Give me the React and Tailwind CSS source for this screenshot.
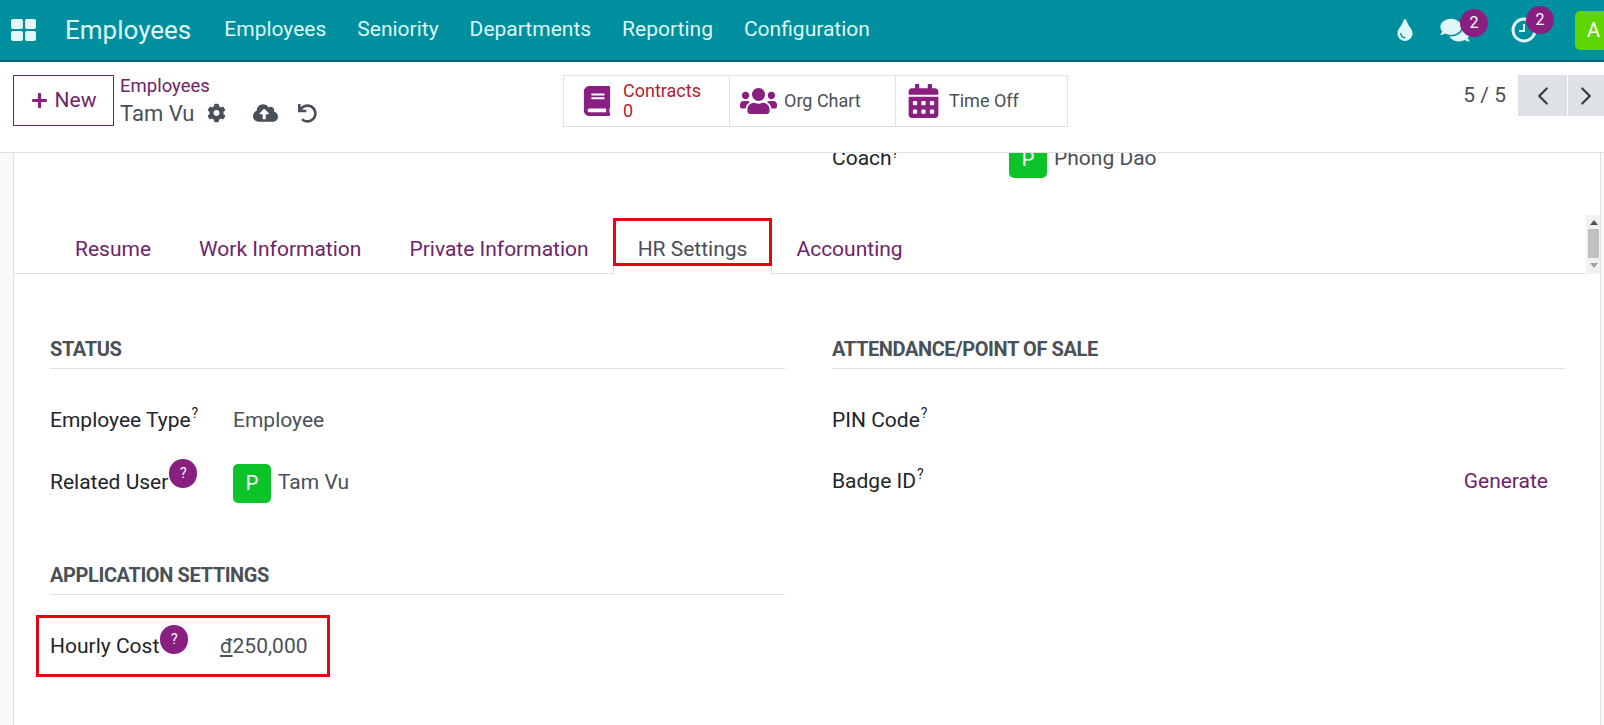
import { FaPlus, FaCog, FaCloudUploadAlt, FaUndo, FaBook, FaUsers, FaCalendarAlt, FaTint, FaComments } from 'react-icons/fa';
import { LuChevronLeft, LuChevronRight } from 'react-icons/lu';

function NavBadge({ children }) {
  return (
    <span className="absolute -top-[8px] left-[20px] w-[28px] h-[28px] rounded-full bg-[#8a1f82] text-white text-[16px] flex items-center justify-center">
      {children}
    </span>
  );
}

function HelpDot({ className }) {
  return (
    <span className={`inline-flex items-center justify-center w-[28px] h-[29px] rounded-full bg-[#8a1f82] text-white text-[14px] shrink-0 ${className}`}>?</span>
  );
}

function Avatar() {
  return (
    <span className="w-[38px] h-[39px] rounded-[5px] bg-[#0cc42a] text-white text-[20px] flex items-center justify-center shrink-0">P</span>
  );
}

function SectionTitle({ children }) {
  return (
    <div className="h-[38px] border-b border-[#dee2e6] text-[20px] font-bold text-[#495057] tracking-[-0.4px] leading-[22px] pt-[7px]">
      {children}
    </div>
  );
}

function Tab({ children, active }) {
  if (active) {
    return (
      <div className="relative h-[56px] -mb-px px-[24px] pt-[8px] flex items-center bg-white border-x border-[#dee2e6] text-[#495057]">
        {children}
        <div className="absolute -left-px -right-px top-0 h-[48px] border-[3px] border-[#e30613]" />
      </div>
    );
  }
  return <div className="h-[55px] px-[24px] pt-[8px] flex items-center text-[#6f2369]">{children}</div>;
}

function StatButton({ icon, children, last }) {
  return (
    <div className={`h-full flex items-center pl-[17px] ${last ? 'w-[169px]' : 'w-[166px] border-r border-[#dee2e6]'}`}>
      {icon}
      {children}
    </div>
  );
}

export default function App() {
  return (
    <div className="w-[1604px] h-[725px] overflow-hidden bg-white flex flex-col font-['Roboto',sans-serif] text-[21px] text-[#212529]">
      {/* Top bar */}
      <header className="h-[62px] shrink-0 bg-[#008f9e] border-b-2 border-[#05636d] flex items-center text-[#dff7f7] overflow-hidden">
        <div className="ml-[11px] w-[25px] grid grid-cols-2 gap-[2px]">
          <span className="h-[10px] rounded-[2px] bg-[#e3f8f8]" />
          <span className="h-[10px] rounded-[2px] bg-[#e3f8f8]" />
          <span className="h-[10px] rounded-[2px] bg-[#e3f8f8]" />
          <span className="h-[10px] rounded-[2px] bg-[#e3f8f8]" />
        </div>
        <div className="ml-[29px] text-[26px]">Employees</div>
        <nav className="ml-[33px] flex gap-[31px]">
          <span>Employees</span>
          <span>Seniority</span>
          <span>Departments</span>
          <span>Reporting</span>
          <span>Configuration</span>
        </nav>
        <div className="ml-auto flex items-center">
          <FaTint className="w-[18px] h-[22px]" />
          <div className="relative ml-[26px] w-[30px] h-[26px]">
            <FaComments className="w-[30px] h-[26px]" />
            <NavBadge>2</NavBadge>
          </div>
          <div className="relative ml-[41px] w-[26px] h-[26px]">
            <svg viewBox="0 0 26 26" className="w-[26px] h-[26px]" fill="none" stroke="currentColor">
              <circle cx="13" cy="13" r="11" strokeWidth="3" />
              <path d="M13 7v7h-5" strokeWidth="2" />
            </svg>
            <span className="absolute -top-[11px] left-[15px] w-[28px] h-[28px] rounded-full bg-[#8a1f82] text-white text-[16px] flex items-center justify-center">2</span>
          </div>
          <div className="ml-[38px] w-[29px] h-[39px] rounded-l-[5px] bg-[#5fd500] text-white text-[20px] pl-[12px] flex items-center -mr-0 overflow-hidden">A</div>
        </div>
      </header>

      {/* Control panel */}
      <div className="h-[91px] shrink-0 border-b border-[#dee2e6] flex pt-[13px]">
        <div className="w-[563px] pl-[13px] flex items-start">
          <button className="w-[101px] h-[51px] border border-[#6f2369] flex items-center justify-center gap-[7px] text-[#6f2369]">
            <FaPlus className="w-[17px] h-[17px] text-[#8a1f82]" />
            New
          </button>
          <div className="ml-[6px]">
            <div className="text-[18.5px] leading-[22px] text-[#6f2369] -mt-[1px] pt-[1px]">Employees</div>
            <div className="flex items-center h-[30px] text-[#495057] mt-[1px]">
              <span className="text-[22px]">Tam Vu</span>
              <FaCog className="ml-[13px] w-[19px] h-[20px]" />
              <FaCloudUploadAlt className="ml-[27px] w-[25px] h-[22px]" />
              <FaUndo className="ml-[20px] w-[19px] h-[19px]" />
            </div>
          </div>
        </div>
        <div className="w-[505px] h-[52px] flex border border-[#dee2e6] text-[18px] leading-[20px] text-[#495057]">
          <StatButton icon={<FaBook className="w-[32px] h-[30px] text-[#8a1f82] mr-[10px]" />}>
            <div className="text-[#b4202f]">Contracts<br />0</div>
          </StatButton>
          <StatButton icon={<FaUsers className="w-[37px] h-[34px] text-[#8a1f82] -ml-[7px] mr-[7px]" />}>
            <div>Org Chart</div>
          </StatButton>
          <StatButton last icon={<FaCalendarAlt className="w-[31px] h-[34px] text-[#8a1f82] -ml-[5px] mr-[10px]" />}>
            <div>Time Off</div>
          </StatButton>
        </div>
        <div className="flex-1 flex justify-end items-start overflow-hidden">
          <div className="h-[41px] flex items-center text-[#495057] mr-[12px]">5 / 5</div>
          <div className="w-[49px] h-[41px] bg-[#dee2e6] flex items-center justify-center mr-px text-[#343a40]">
            <LuChevronLeft className="w-[30px] h-[30px]" strokeWidth={1.7} />
          </div>
          <div className="w-[36px] h-[41px] bg-[#dee2e6] flex items-center pl-[3px] text-[#343a40]">
            <LuChevronRight className="w-[30px] h-[30px] shrink-0" strokeWidth={1.7} />
          </div>
        </div>
      </div>

      {/* Form */}
      <main className="flex-1 min-h-0 flex bg-[#f8f9fa]">
        <div className="w-[13px] shrink-0 border-r border-[#dee2e6] box-content" />
        <div className="relative w-[1587px] bg-white border-r border-[#dee2e6] overflow-hidden">
          <div className="-mt-[14px] h-[39px] flex items-center pl-[818px]">
            <span className="w-[177px]">Coach<sup className="text-[14px]">?</sup></span>
            <Avatar />
            <span className="ml-[7px] text-[#495057]">Phong Dao</span>
          </div>

          <div className="mt-[40px] h-[56px] pl-[37px] border-b border-[#dee2e6] flex">
            <Tab>Resume</Tab>
            <Tab>Work Information</Tab>
            <Tab>Private Information</Tab>
            <Tab active>HR Settings</Tab>
            <Tab>Accounting</Tab>
          </div>

          {/* Scrollbar of the tab strip */}
          <div className="absolute left-[1572px] top-[62px] w-[15px] h-[59px] bg-[#f1f1f1] flex flex-col items-center">
            <span className="mt-[5px] border-x-[4px] border-x-transparent border-b-[5px] border-b-[#505050]" />
            <span className="mt-[4px] w-[11px] h-[29px] bg-[#c1c1c1]" />
            <span className="mt-[5px] border-x-[4px] border-x-transparent border-t-[5px] border-t-[#a3a3a3]" />
          </div>

          <div className="mt-[57px] pl-[36px] grid grid-cols-[735px_733px] gap-x-[47px]">
            <section>
              <SectionTitle>STATUS</SectionTitle>
              <div className="mt-[32px] flex items-center h-[40px]">
                <span className="w-[183px]">Employee Type<sup className="text-[14px] -top-[9px] relative align-baseline ml-[1px]">?</sup></span>
                <span className="text-[#495057]">Employee</span>
              </div>
              <div className="mt-[22px] flex items-center h-[40px]">
                <span className="w-[183px] flex items-center">
                  Related User
                  <HelpDot className="relative -top-[10px] ml-px" />
                </span>
                <Avatar />
                <span className="ml-[7px] text-[#495057]">Tam Vu</span>
              </div>
              <div className="mt-[54px]">
                <SectionTitle>APPLICATION SETTINGS</SectionTitle>
              </div>
              <div className="relative mt-[32px] flex items-center h-[40px]">
                <span className="w-[170px] flex items-center">
                  Hourly Cost
                  <HelpDot className="relative -top-[8px] ml-px" />
                </span>
                <span className="text-[#495057]"><span className="underline">đ</span>250,000</span>
                <div className="absolute -left-[14px] -top-[12px] w-[294px] h-[62px] border-[3px] border-[#e30613]" />
              </div>
            </section>
            <section>
              <SectionTitle>ATTENDANCE/POINT OF SALE</SectionTitle>
              <div className="mt-[32px] flex items-center h-[40px]">
                <span>PIN Code<sup className="text-[14px] -top-[9px] relative align-baseline ml-[1px]">?</sup></span>
              </div>
              <div className="mt-[21px] flex items-center justify-between h-[40px] pr-[17px]">
                <span>Badge ID<sup className="text-[14px] -top-[9px] relative align-baseline ml-[1px]">?</sup></span>
                <span className="text-[#6f2369]">Generate</span>
              </div>
            </section>
          </div>
        </div>
      </main>
    </div>
  );
}
